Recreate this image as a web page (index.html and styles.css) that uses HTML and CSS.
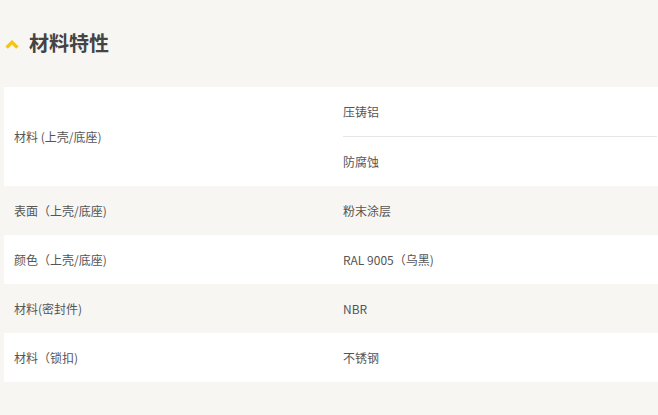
FILE: index.html
```html
<!DOCTYPE html>
<html lang="zh-CN">
<head>
<meta charset="utf-8">
<link rel="stylesheet" href="styles.css">
</head>
<body>
<div class="section">
  <h2 class="title">
    <svg class="chev" width="14" height="9" viewBox="0 0 14 9"><path d="M1.6 7.6 L7 2.3 L12.4 7.6" fill="none" stroke="#f6c413" stroke-width="3.4"/></svg>
    <span>材料特性</span>
  </h2>
  <div class="table">
    <div class="row white">
      <div class="label">材料 (上壳/底座)</div>
      <div class="values">
        <div class="val sep">压铸铝</div>
        <div class="val">防腐蚀</div>
      </div>
    </div>
    <div class="row">
      <div class="label">表面（上壳/底座)</div>
      <div class="values"><div class="val">粉末涂层</div></div>
    </div>
    <div class="row white">
      <div class="label">颜色（上壳/底座)</div>
      <div class="values"><div class="val">RAL 9005（乌黑)</div></div>
    </div>
    <div class="row">
      <div class="label">材料(密封件)</div>
      <div class="values"><div class="val">NBR</div></div>
    </div>
    <div class="row white">
      <div class="label">材料（锁扣)</div>
      <div class="values"><div class="val">不锈钢</div></div>
    </div>
  </div>
</div>
</body>
</html>
```
FILE: styles.css
```css
html, body {
  margin: 0;
  padding: 0;
  background: #f7f6f3;
  overflow: hidden;
}
body {
  font-family: "Noto Sans CJK SC", "Noto Sans", sans-serif;
  color: #555;
  font-size: 12px;
}
.section {
  padding-top: 29px;
}
.title {
  margin: 0 0 30px 5px;
  display: flex;
  align-items: center;
  gap: 10px;
  font-size: 20px;
  font-weight: bold;
  color: #444;
  height: 28px;
  line-height: 28px;
}
.chev {
  display: block;
  margin-top: 2px;
}
.table {
  margin-left: 4px;
  width: 654px;
}
.row {
  display: grid;
  grid-template-columns: 339px 1fr;
  align-items: center;
}
.row.white {
  background: #fff;
}
.label {
  padding-left: 10px;
}
.values {
  padding-right: 1px;
}
.val {
  height: 49px;
  line-height: 49px;
}
.val.sep {
  height: 49px;
  border-bottom: 1px solid #e6e6e6;
}
```
